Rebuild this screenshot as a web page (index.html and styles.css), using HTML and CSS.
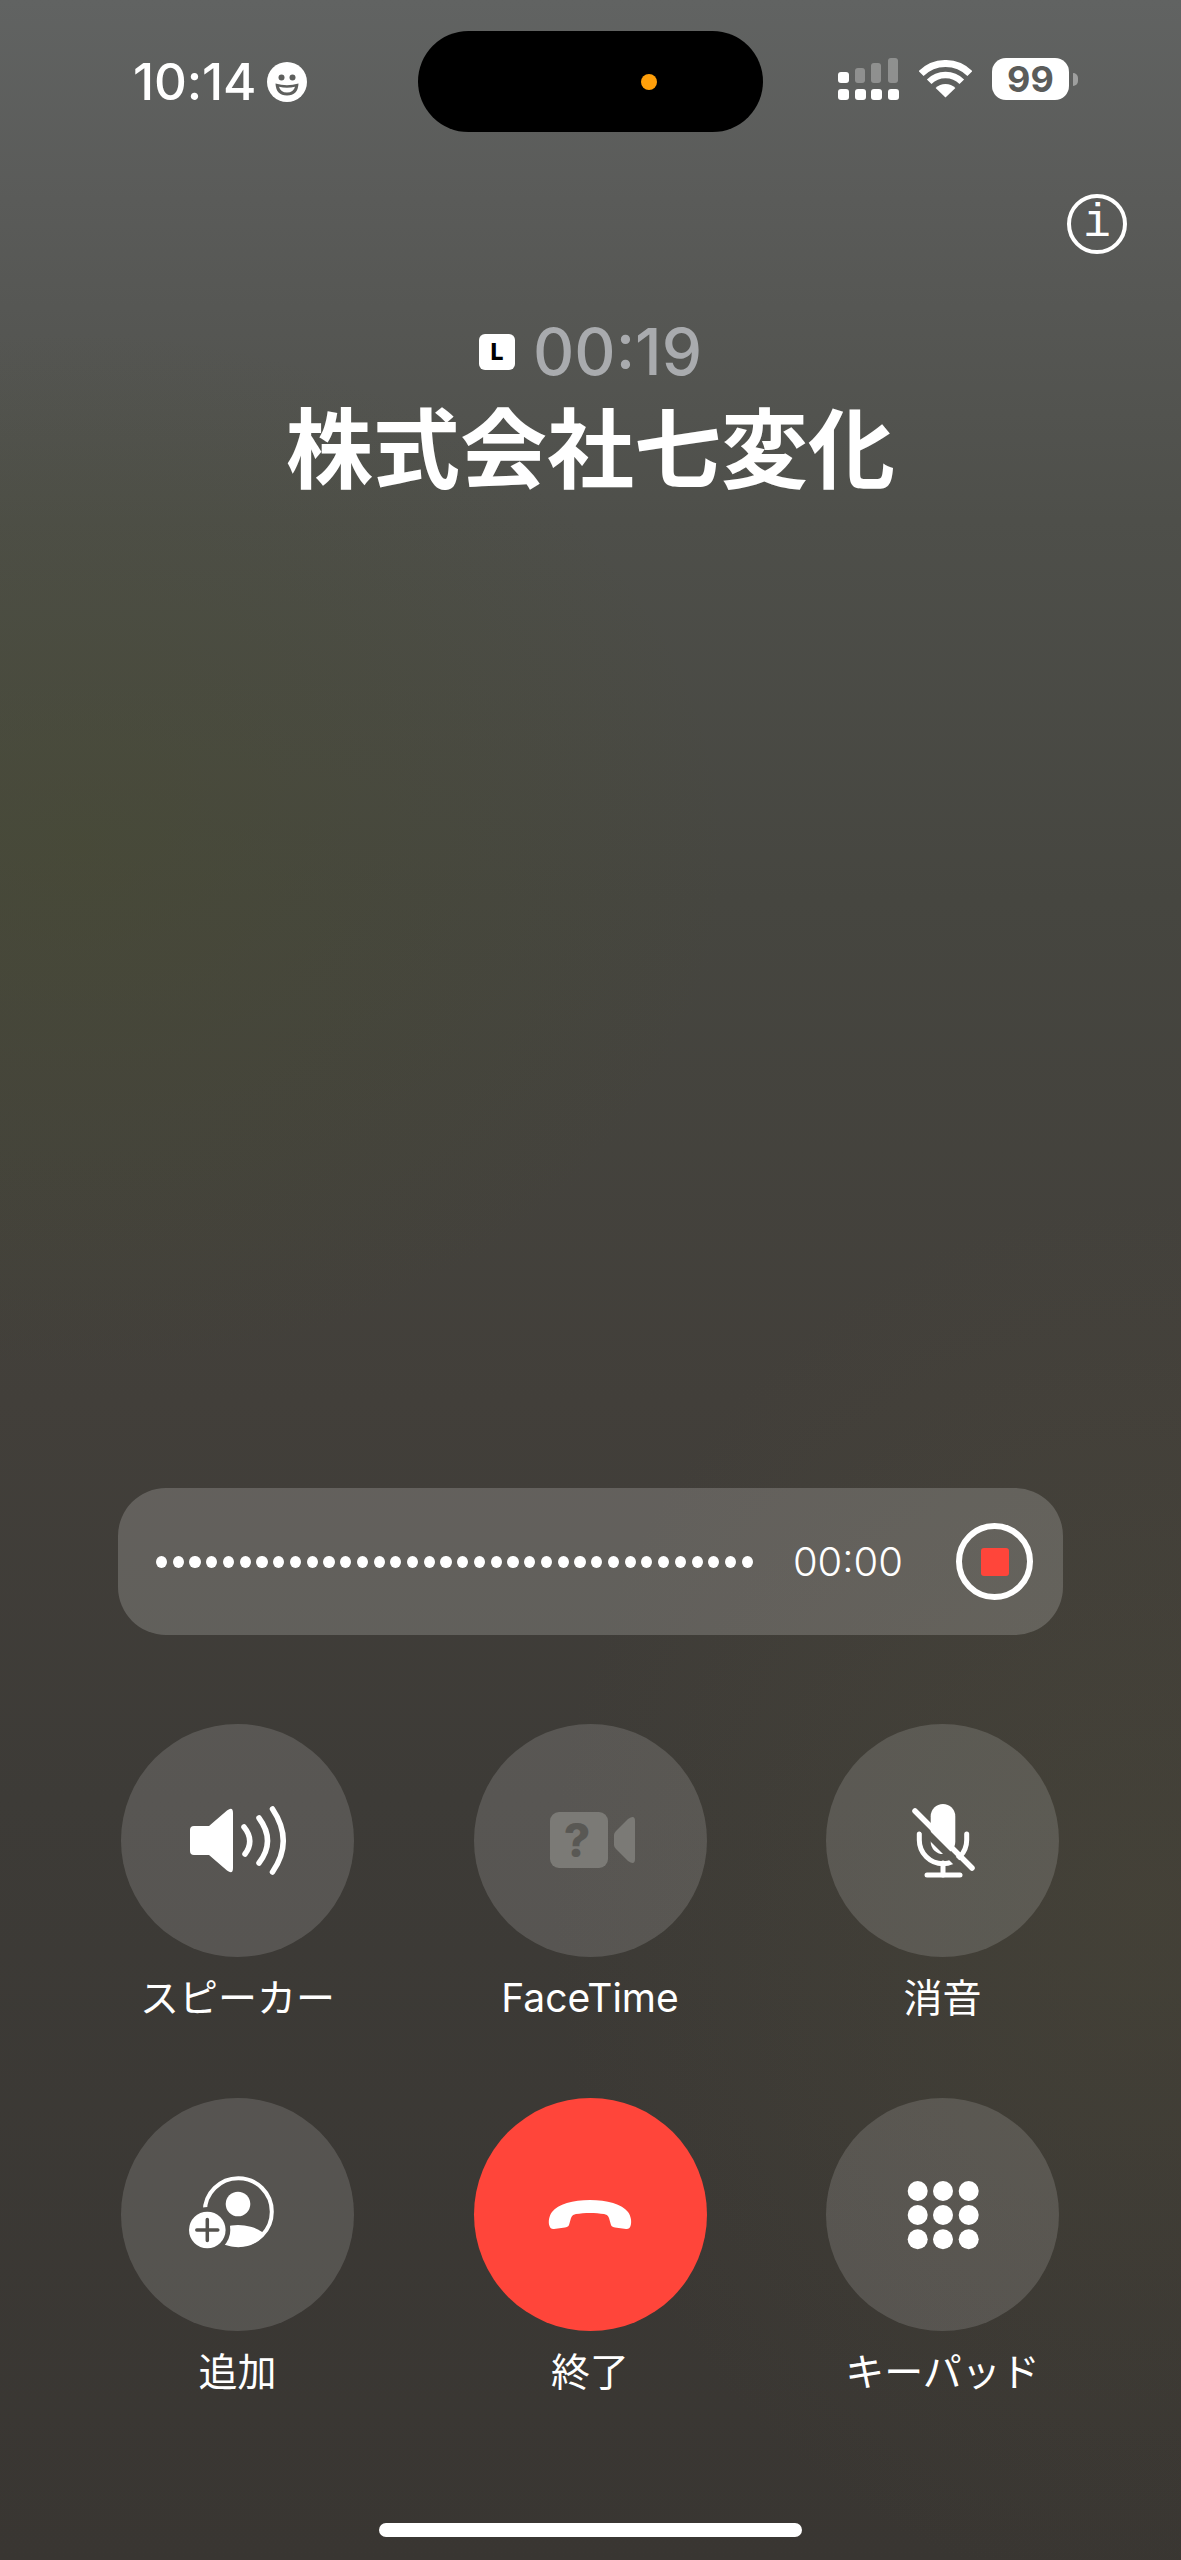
FILE: index.html
```html
<!DOCTYPE html>
<html lang="ja">
<head>
    <meta charset="UTF-8">
    <title>通話中</title>
    <link rel="stylesheet" href="styles.css">
</head>
<body>
    <div class="screen">
        <!-- status bar -->
        <div class="status">
            <div class="status-left">
                <span class="clock">10:14</span>
                <svg class="smiley" width="40" height="40" viewBox="0 0 40 40">
                    <circle cx="20" cy="20" r="20" fill="#fff"/>
                    <circle cx="14.5" cy="15.5" r="3" fill="#5e5f5d"/>
                    <circle cx="25.5" cy="15.5" r="3" fill="#5e5f5d"/>
                    <path d="M8.5 21.5Q20 25 31.5 21.5Q31 33.5 20 33.5Q9 33.5 8.5 21.5Z" fill="#5e5f5d"/>
                    <path d="M12 24.7Q20 26.8 28 24.7Q26.5 30.5 20 30.5Q13.5 30.5 12 24.7Z" fill="#fff"/>
                </svg>
            </div>
            <div class="island"><span class="island-dot"></span></div>
            <div class="status-right">
                <svg width="61" height="42" viewBox="0 0 61 42">
                    <g fill="#fff">
                        <rect x="0" y="31" width="11" height="11" rx="3"/>
                        <rect x="17" y="31" width="11" height="11" rx="3"/>
                        <rect x="33" y="31" width="11" height="11" rx="3"/>
                        <rect x="50" y="31" width="11" height="11" rx="3"/>
                        <rect x="0" y="14" width="11" height="11" rx="3"/>
                    </g>
                    <g fill="#fff" opacity=".3">
                        <rect x="17" y="10" width="10" height="15" rx="3"/>
                        <rect x="33" y="5" width="10" height="20" rx="3"/>
                        <rect x="50" y="0" width="10" height="25" rx="3"/>
                    </g>
                </svg>
                <svg class="wifi" width="53" height="38" viewBox="0 0 53 38">
                    <path d="M2.1 13.6A34.5 34.5 0 0 1 50.9 13.6" fill="none" stroke="#fff" stroke-width="7"/>
                    <path d="M10.2 21.7A23 23 0 0 1 42.8 21.7" fill="none" stroke="#fff" stroke-width="6.5"/>
                    <path d="M26.5 37.5L16.6 28A14 14 0 0 1 36.4 28Z" fill="#fff"/>
                </svg>
                <div class="battery">99</div>
            </div>
        </div>

        <div class="info-row">
            <div class="info">i</div>
        </div>

        <!-- call header -->
        <div class="timer-row">
            <span class="line-badge">L</span>
            <span class="timer">00:19</span>
        </div>
        <div class="caller">株式会社七変化</div>

        <!-- recording bar -->
        <div class="rec-bar">
            <div class="rec-dots">
                <i></i><i></i><i></i><i></i><i></i><i></i><i></i><i></i><i></i><i></i><i></i><i></i>
                <i></i><i></i><i></i><i></i><i></i><i></i><i></i><i></i><i></i><i></i><i></i><i></i>
                <i></i><i></i><i></i><i></i><i></i><i></i><i></i><i></i><i></i><i></i><i></i><i></i>
            </div>
            <span class="rec-time">00:00</span>
            <div class="rec-stop"><span class="rec-square"></span></div>
        </div>

        <!-- call buttons -->
        <div class="controls">
            <div class="control">
                <div class="round">
                    <svg width="120" height="120" viewBox="0 0 120 120">
                        <path d="M16 45H31L49 29.5Q55 25 55 32V87Q55 94 49 89.5L31 74H16Q12 74 12 70V49Q12 45 16 45Z" fill="#fff"/>
                        <g fill="none" stroke="#fff" stroke-width="5.5" stroke-linecap="round">
                            <path d="M66 46Q77 59.5 67 73"/>
                            <path d="M81 37Q98 60 81 82"/>
                            <path d="M94.5 28Q116 60 94.5 91"/>
                        </g>
                    </svg>
                </div>
                <div class="label">スピーカー</div>
            </div>
            <div class="control">
                <div class="round">
                    <svg width="120" height="120" viewBox="0 0 120 120">
                        <rect x="20" y="31" width="58" height="56" rx="9" fill="#7b7a76"/>
                        <path d="M84 54Q84 52 86 50L98 38Q105 33 105 40V78Q105 85 98 80L86 68Q84 66 84 64Z" fill="#7b7a76"/>
                        <text class="question" x="47" y="76" text-anchor="middle">?</text>
                    </svg>
                </div>
                <div class="label">FaceTime</div>
            </div>
            <div class="control">
                <div class="round">
                    <svg width="120" height="120" viewBox="0 0 120 120">
                        <mask id="micGap">
                            <rect width="120" height="120" fill="#fff"/>
                            <path d="M27 35L84 92" stroke="#000" stroke-width="7"/>
                        </mask>
                        <g mask="url(#micGap)">
                            <rect x="47.7" y="23" width="24.6" height="50" rx="12.3" fill="#fff"/>
                            <g fill="none" stroke="#fff" stroke-width="5" stroke-linecap="round">
                                <path d="M36.3 53V59A23.7 23.7 0 0 0 83.7 59V53"/>
                                <path d="M60 82V94"/>
                                <path d="M44 94H77"/>
                            </g>
                        </g>
                        <path d="M32 30L89 87" stroke="#fff" stroke-width="5.5" stroke-linecap="round"/>
                    </svg>
                </div>
                <div class="label">消音</div>
            </div>
            <div class="control">
                <div class="round">
                    <svg width="120" height="120" viewBox="0 0 120 120">
                        <clipPath id="ringClip"><circle cx="60.3" cy="56.7" r="35"/></clipPath>
                        <mask id="addGap">
                            <rect width="120" height="120" fill="#fff"/>
                            <circle cx="29.3" cy="75" r="23" fill="#000"/>
                        </mask>
                        <g mask="url(#addGap)">
                            <circle cx="60.3" cy="56.7" r="33.5" fill="none" stroke="#fff" stroke-width="4"/>
                            <circle cx="60" cy="49" r="12.3" fill="#fff"/>
                            <ellipse cx="60" cy="92" rx="33" ry="22" fill="#fff" clip-path="url(#ringClip)"/>
                        </g>
                        <circle cx="29.3" cy="75" r="18.3" fill="#fff"/>
                        <path d="M18.8 75H39.8M29.3 64.5V85.5" stroke="#54524e" stroke-width="3.5" stroke-linecap="round"/>
                    </svg>
                </div>
                <div class="label">追加</div>
            </div>
            <div class="control">
                <div class="round end">
                    <svg width="120" height="120" viewBox="0 0 120 120">
                        <path d="M60 45C77 45 92 49 98 57C101 61 102 67 100.5 71C100 73 98 74.5 96 74L85 72.5C82 72 81 71 80.7 69L79 63C78 60 76 59.5 74 59C66 57.5 54 57.5 46 59C44 59.5 42 60 41 63L39.3 69C39 71 38 72 35 72.5L24 74C22 74.5 20 73 19.5 71C18 67 19 61 22 57C28 49 43 45 60 45Z" fill="#fff"/>
                    </svg>
                </div>
                <div class="label">終了</div>
            </div>
            <div class="control">
                <div class="round">
                    <svg width="120" height="120" viewBox="0 0 120 120">
                        <g fill="#fff">
                            <circle cx="34.7" cy="36" r="10"/>
                            <circle cx="60" cy="36" r="10"/>
                            <circle cx="85.7" cy="36" r="10"/>
                            <circle cx="34.7" cy="60" r="10"/>
                            <circle cx="60" cy="60" r="10"/>
                            <circle cx="85.7" cy="60" r="10"/>
                            <circle cx="34.7" cy="84.3" r="10"/>
                            <circle cx="60" cy="84.3" r="10"/>
                            <circle cx="85.7" cy="84.3" r="10"/>
                        </g>
                    </svg>
                </div>
                <div class="label">キーパッド</div>
            </div>
        </div>

        <div class="home-bar"></div>
    </div>
</body>
</html>
```

FILE: styles.css
```css
*{
    margin: 0;
    padding: 0;
    box-sizing: border-box;
}
body{
    background: #3a3733;
    font-family: Inter, "Noto Sans CJK JP", sans-serif;
    color: #fff;
}
.screen{
    width: 1181px;
    height: 2560px;
    display: flex;
    flex-direction: column;
    overflow: hidden;
    background:
        radial-gradient(ellipse 650px 520px at 80px 850px, rgba(72,76,46,.45), rgba(72,76,46,0)),
        radial-gradient(ellipse 600px 700px at 1150px 1900px, rgba(84,80,58,.3), rgba(84,80,58,0)),
        linear-gradient(to bottom, #616362 0, #5a5b59 200px, #4e4f4a 520px, #464640 900px, #423f3a 1400px, #3d3b37 1800px, #393632 2560px);
}

/*status bar*/
.status{
    display: flex;
    padding: 31px 0 0 133px;
}
.status-left{
    width: 285px;
    height: 101px;
    display: flex;
    align-items: center;
    gap: 11px;
}
.clock{
    font-size: 51px;
    font-weight: 500;
    letter-spacing: -.2px;
}
.island{
    width: 345px;
    height: 101px;
    border-radius: 51px;
    background: #000;
    display: flex;
    align-items: center;
    justify-content: flex-end;
    padding-right: 106px;
}
.island-dot{
    width: 16px;
    height: 16px;
    border-radius: 50%;
    background: #ff9f0a;
}
.status-right{
    margin-left: 75px;
    padding-top: 27px;
    display: flex;
    align-items: flex-start;
}
.wifi{
    margin: 2px 0 0 20px;
}
.battery{
    position: relative;
    width: 77px;
    height: 42px;
    margin-left: 20px;
    border-radius: 14px;
    background: #fff;
    color: #5b5c5a;
    font-size: 36px;
    font-weight: 700;
    line-height: 42px;
    text-align: center;
}
.battery::after{
    content: "";
    position: absolute;
    left: 81px;
    top: 15px;
    width: 5px;
    height: 13px;
    border-radius: 0 5px 5px 0;
    background: rgba(255,255,255,.4);
}

/*info button*/
.info-row{
    display: flex;
    justify-content: flex-end;
    padding-right: 54px;
    margin-top: 62px;
}
.info{
    width: 60px;
    height: 60px;
    border: 4px solid #fff;
    border-radius: 50%;
    font-family: "Liberation Mono", monospace;
    font-size: 46px;
    line-height: 52px;
    overflow: hidden;
    text-align: center;
}

/*call header*/
.timer-row{
    margin-top: 68px;
    height: 60px;
    display: flex;
    justify-content: center;
    align-items: center;
    gap: 18px;
}
.line-badge{
    width: 36px;
    height: 36px;
    border-radius: 6px;
    background: #fff;
    color: #000;
    font-size: 23px;
    font-weight: 800;
    line-height: 36px;
    text-align: center;
}
.timer{
    font-size: 64px;
    line-height: 60px;
    font-weight: 500;
    color: #a9abae;
}
.caller{
    margin-top: 12px;
    font-family: "Noto Sans CJK JP", sans-serif;
    font-size: 87px;
    font-weight: 700;
    line-height: 100px;
    text-align: center;
}

/*recording bar*/
.rec-bar{
    width: 945px;
    height: 147px;
    margin: 994px 0 0 118px;
    padding-left: 38px;
    display: flex;
    align-items: center;
    border-radius: 48px;
    background: rgba(255,255,255,.18);
}
.rec-dots{
    display: flex;
    gap: 5.55px;
}
.rec-dots i{
    display: block;
    width: 11.2px;
    height: 12px;
    border-radius: 50%;
    background: #fff;
}
.rec-time{
    margin-left: 40px;
    font-size: 40px;
    font-weight: 300;
}
.rec-stop{
    width: 77px;
    height: 77px;
    margin-left: 53px;
    border: 6.5px solid #fff;
    border-radius: 50%;
    display: flex;
    align-items: center;
    justify-content: center;
}
.rec-square{
    width: 28px;
    height: 28px;
    border-radius: 3px;
    background: #ff453a;
}

/*call buttons*/
.controls{
    margin: 89px 0 0 121px;
    display: grid;
    grid-template-columns: repeat(3, 233px);
    column-gap: 119.5px;
    row-gap: 75px;
}
.control{
    display: flex;
    flex-direction: column;
    align-items: center;
}
.round{
    width: 233px;
    height: 233px;
    border-radius: 50%;
    background: rgba(255,255,255,.14);
    display: flex;
    align-items: center;
    justify-content: center;
}
.round.end{
    background: #ff453a;
}
.question{
    font-family: Inter, sans-serif;
    font-size: 46px;
    font-weight: 800;
    fill: #595854;
}
.label{
    margin-top: 16px;
    font-size: 39px;
    line-height: 50px;
    white-space: nowrap;
}

/*home indicator*/
.home-bar{
    width: 423px;
    height: 14px;
    margin: 126px auto 0;
    border-radius: 7px;
    background: #fff;
}
```
